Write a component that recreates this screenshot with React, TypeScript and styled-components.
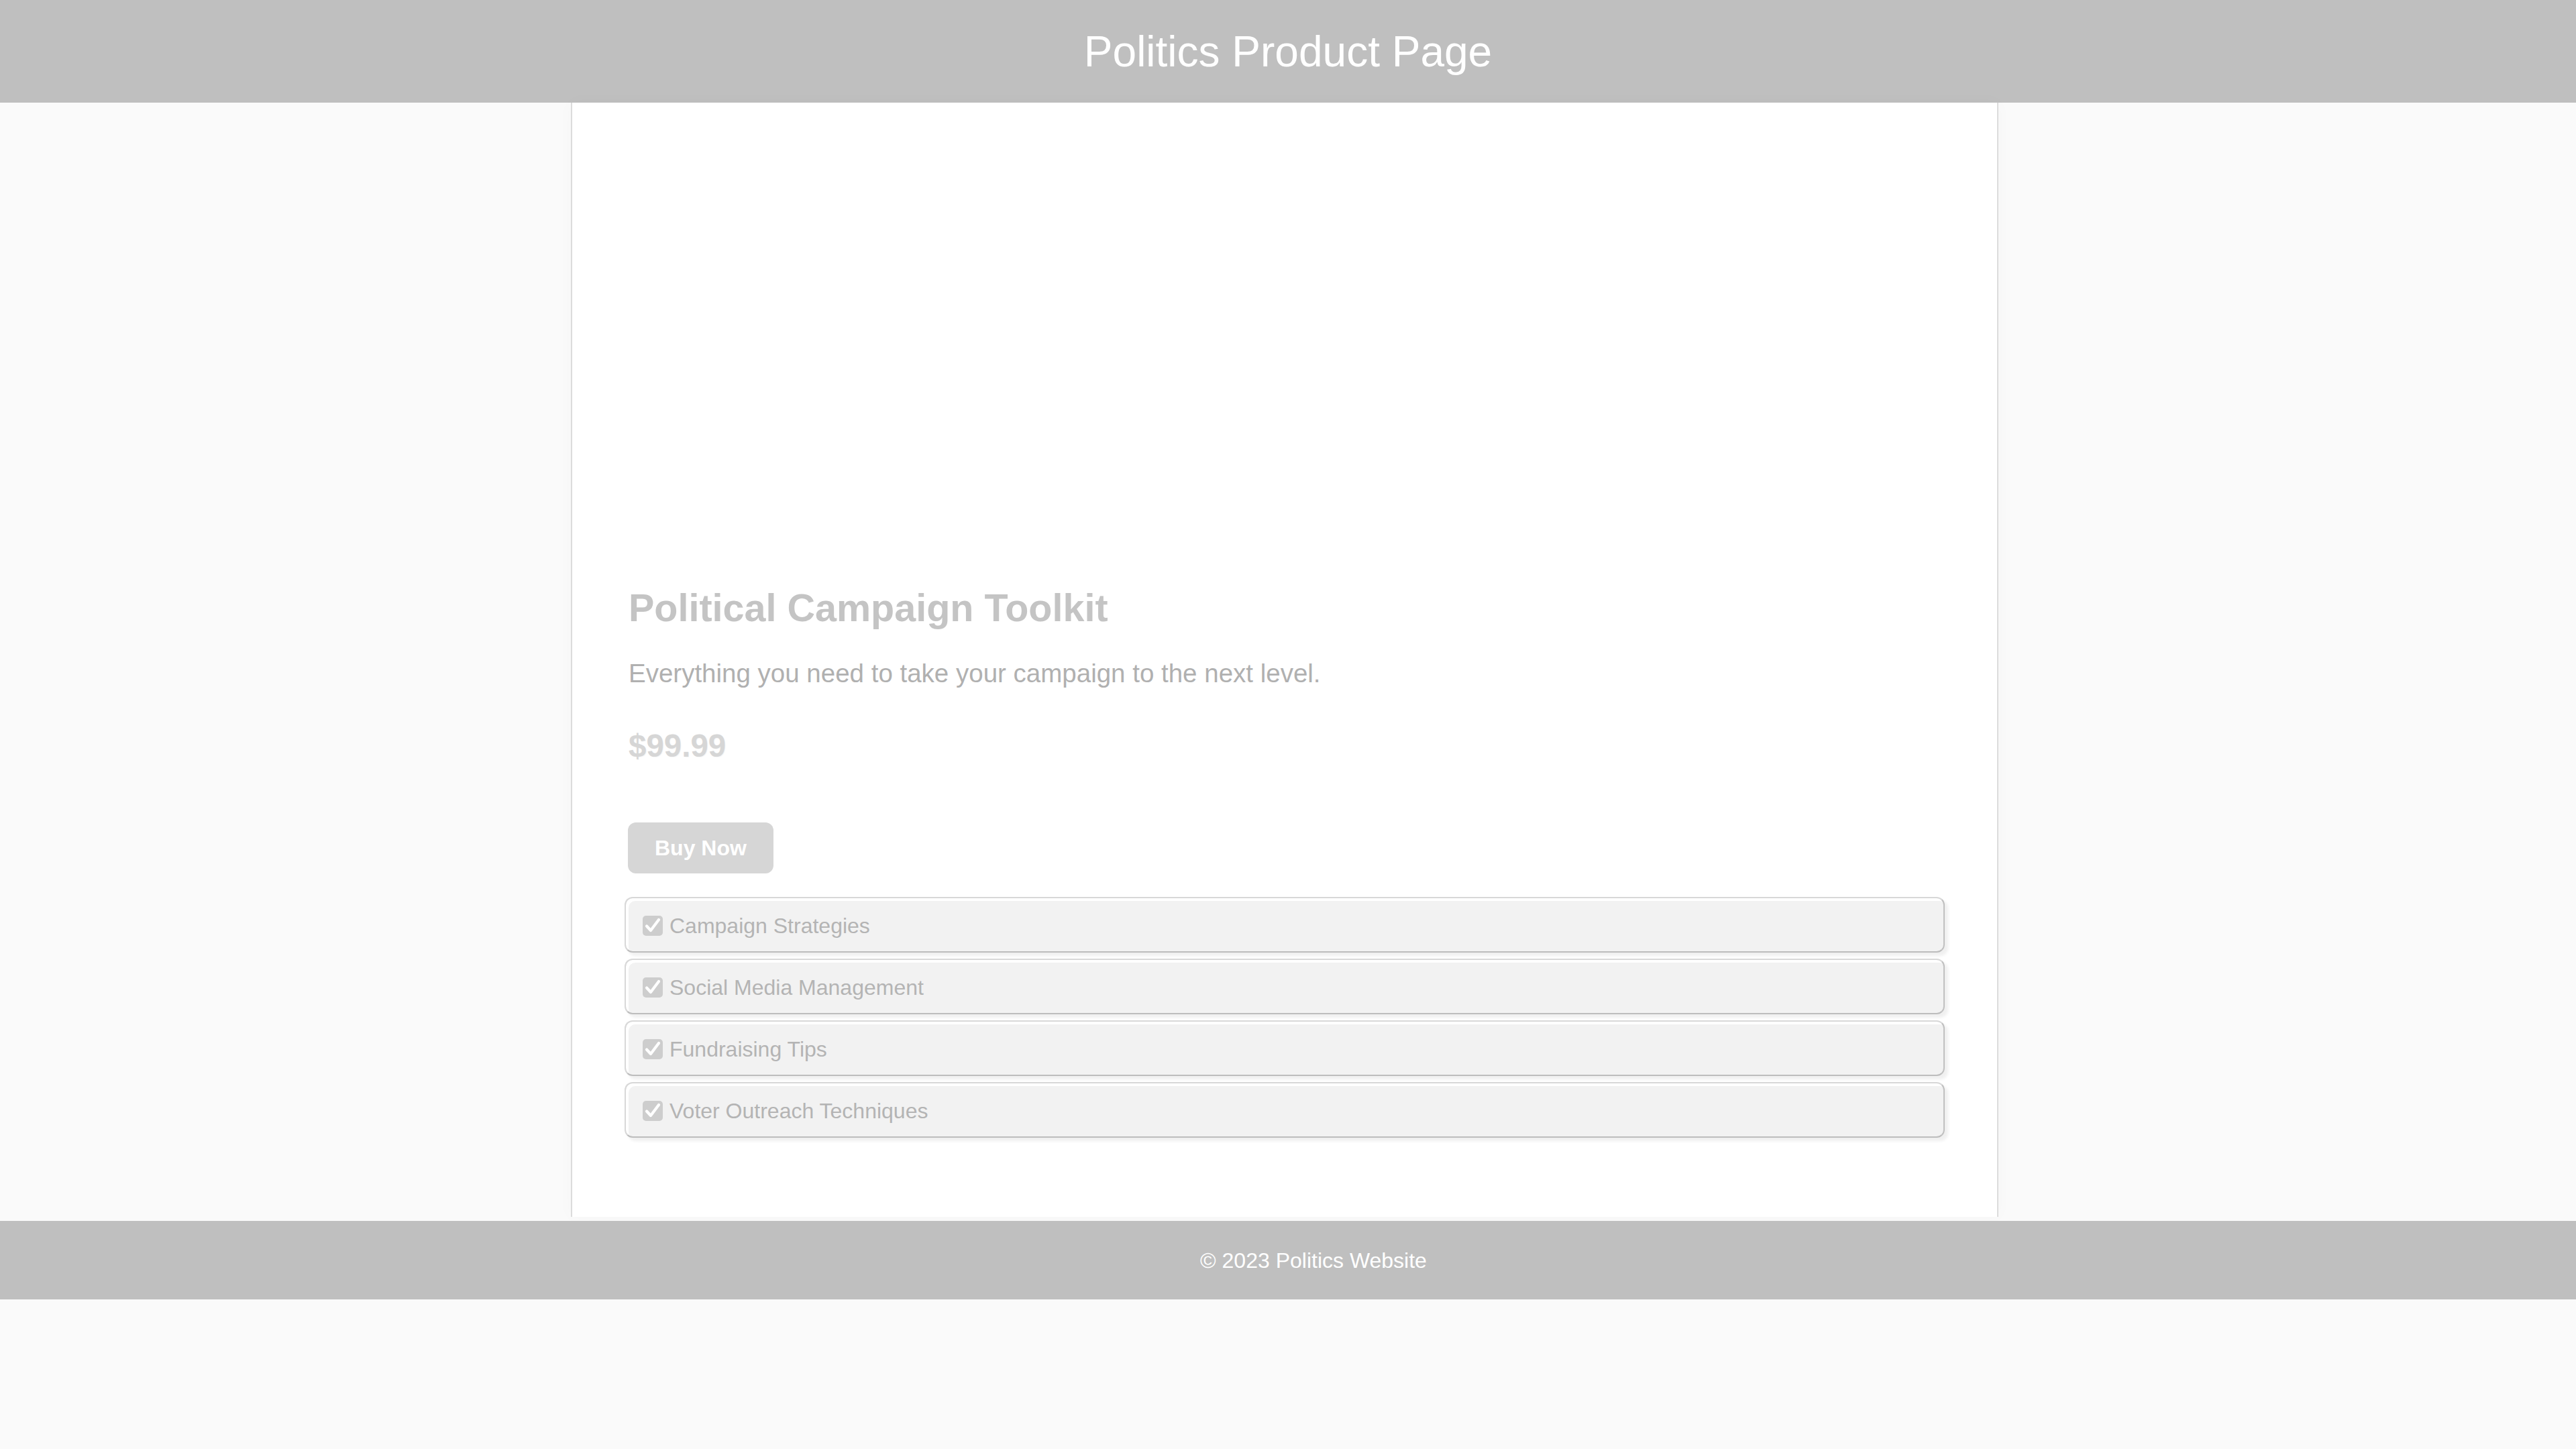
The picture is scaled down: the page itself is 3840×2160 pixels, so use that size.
import React from "react";
import styled, { createGlobalStyle } from "styled-components";

const Global = createGlobalStyle`
  html, body {
    margin: 0;
    padding: 0;
    background: #fafafa;
    font-family: "Liberation Sans", Arial, sans-serif;
  }
  * { box-sizing: border-box; }
`;

const Page = styled.div`
  min-height: 2160px;
  background: #fafafa;
  overflow-x: hidden;
`;

const Header = styled.header`
  background: #bfbfbf;
  height: 153px;
  display: flex;
  align-items: center;
  justify-content: center;
`;

const Title = styled.h1`
  margin: 0;
  color: #ffffff;
  font-size: 64px;
  font-weight: 400;
  line-height: 74px;
`;

const Container = styled.main`
  width: 2128px;
  margin: 0 0 6px calc(50% - 1069px);
  background: #ffffff;
  border-left: 2px solid #dcdcdc;
  border-right: 2px solid #dcdcdc;
  box-shadow: 0 0 24px rgba(0, 0, 0, 0.025);
  padding: 0 78px 118px;
`;

const ImageArea = styled.div`
  height: 680px;
  margin-bottom: 40px;
`;

const Info = styled.div`
  padding-left: 6px;
`;

const ProductName = styled.h2`
  margin: 0 0 43px;
  font-size: 57.5px;
  line-height: 66px;
  font-weight: 700;
  color: #c4c4c4;
`;

const Description = styled.p`
  margin: 0 0 59px;
  font-size: 38.5px;
  line-height: 44px;
  color: #b0b0b0;
`;

const Price = styled.p`
  margin: 0 0 88px;
  font-size: 47.5px;
  line-height: 53px;
  font-weight: 700;
  color: #d6d6d6;
  text-shadow: 1px 1px 1px rgba(0, 0, 0, 0.04);
`;

const BuyButton = styled.button`
  display: block;
  margin: 0 0 35px 5px;
  height: 76px;
  padding: 0 40px;
  border: none;
  border-radius: 12px;
  background: #d6d6d6;
  color: #ffffff;
  font-family: "Liberation Sans", Arial, sans-serif;
  font-size: 32px;
  font-weight: 700;
  line-height: 37px;
  cursor: pointer;
`;

const FeatureList = styled.ul`
  list-style: none;
  margin: 0;
  padding: 0;
  display: flex;
  flex-direction: column;
  gap: 9px;
`;

const FeatureItem = styled.li`
  display: flex;
  align-items: center;
  height: 83px;
  padding: 3px 25px 0 24px;
  background: #f2f2f2;
  border: 2px solid #d8d8d8;
  border-right-color: #c0c0c0;
  border-bottom-color: #bdbdbd;
  border-radius: 12px;
  box-shadow: inset 4px 4px 0 #ffffff, 5px 5px 4px #f0f0f0;
  font-size: 32px;
  line-height: 37px;
  color: #b4b4b4;
`;

const CheckIcon = styled.svg`
  flex: none;
  width: 32px;
  height: 32px;
  margin-right: 9px;
`;

const Footer = styled.footer`
  background: #bfbfbf;
  color: #ffffff;
  text-align: center;
  padding: 41px 0 40px 76px;
  font-size: 32px;
  line-height: 36px;
`;

const features = [
  "Campaign Strategies",
  "Social Media Management",
  "Fundraising Tips",
  "Voter Outreach Techniques",
];

const Check = () => (
  <CheckIcon viewBox="0 0 32 32" aria-hidden="true">
    <rect x="1" y="1" width="30" height="30" rx="5" fill="#cdcdcd" />
    <path
      d="M7 16.5 L13 23 L25 7"
      fill="none"
      stroke="#ffffff"
      strokeWidth="4.2"
      strokeLinecap="round"
      strokeLinejoin="round"
    />
  </CheckIcon>
);

export default function App() {
  return (
    <>
      <Global />
      <Page>
        <Header>
          <Title>Politics Product Page</Title>
        </Header>
        <Container>
          <ImageArea />
          <Info>
            <ProductName>Political Campaign Toolkit</ProductName>
            <Description>
              Everything you need to take your campaign to the next level.
            </Description>
            <Price>$99.99</Price>
          </Info>
          <BuyButton>Buy Now</BuyButton>
          <FeatureList>
            {features.map((f) => (
              <FeatureItem key={f}>
                <Check />
                {f}
              </FeatureItem>
            ))}
          </FeatureList>
        </Container>
        <Footer>© 2023 Politics Website</Footer>
      </Page>
    </>
  );
}
